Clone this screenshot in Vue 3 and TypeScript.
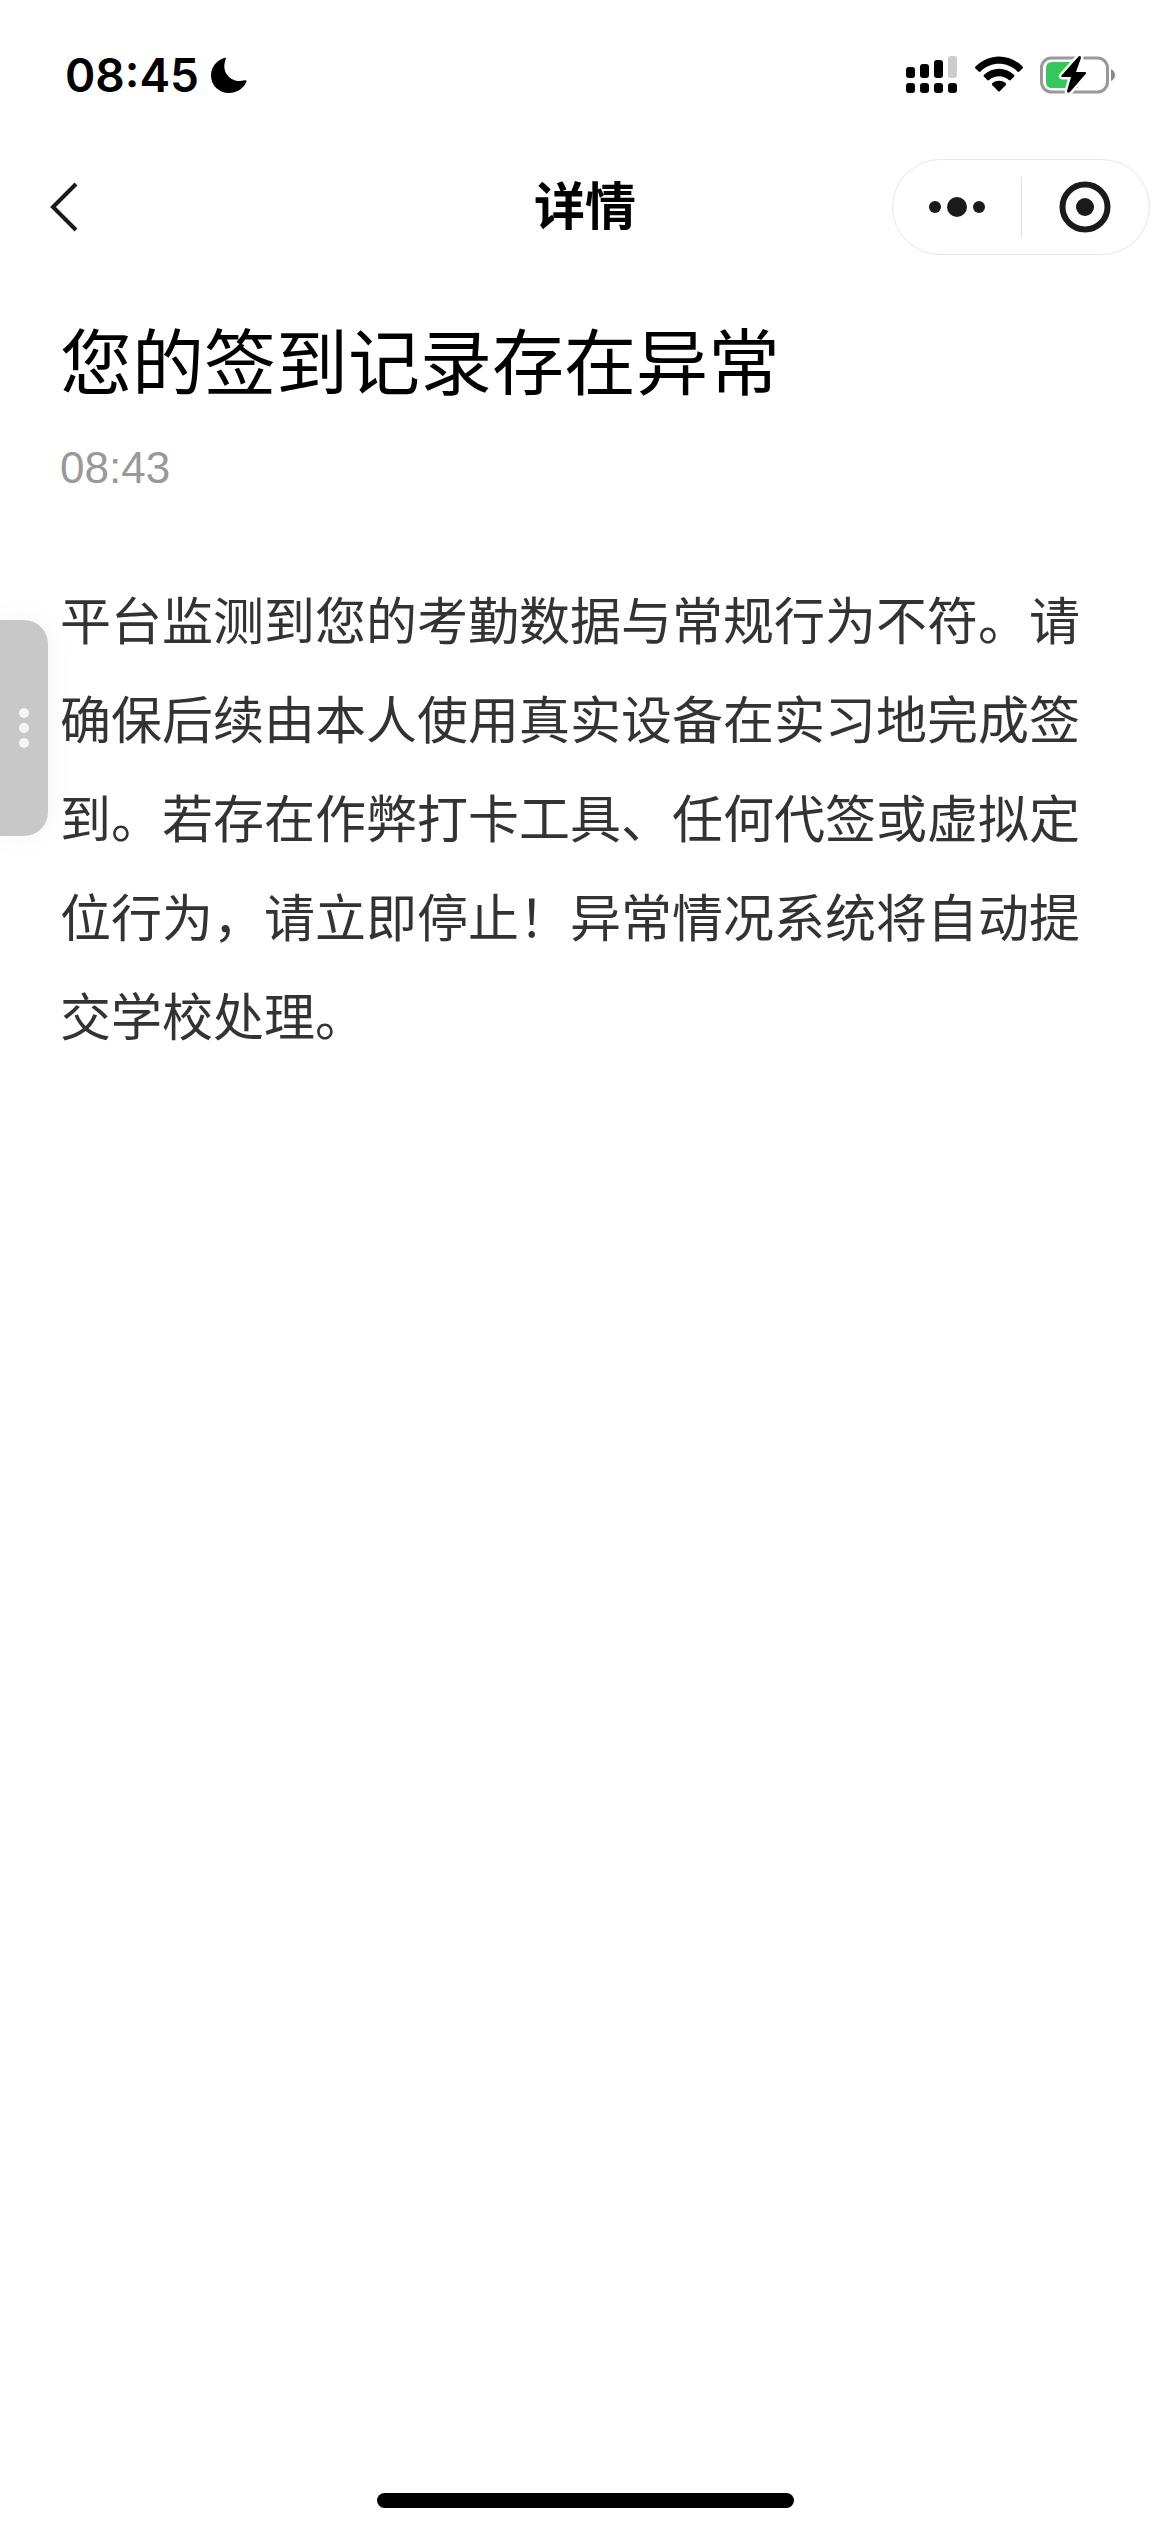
<script setup lang="ts">
const statusTime = '08:45'
const pageTitle = '详情'
const notice = {
  title: '您的签到记录存在异常',
  time: '08:43',
  body: '平台监测到您的考勤数据与常规行为不符。请确保后续由本人使用真实设备在实习地完成签到。若存在作弊打卡工具、任何代签或虚拟定位行为，请立即停止！异常情况系统将自动提交学校处理。',
}
const signalBars = [
  { x: 0, y: 11, height: 11, active: true },
  { x: 14, y: 8, height: 14, active: true },
  { x: 28, y: 4, height: 18, active: true },
  { x: 42, y: 0, height: 22, active: false },
]
</script>

<template>
  <div class="page">
    <header>
      <div class="status">
        <div class="status-left">
          <span class="clock">{{ statusTime }}</span>
          <svg width="36" height="36" viewBox="0 0 36 36" aria-hidden="true">
            <path d="M13 1 C14.500 0.300 15.300 1 14.700 2.400 C12.800 7 12.500 13 16.300 18 C20.500 23.700 27.500 25 33.600 23.300 C35.200 22.900 36 23.700 35.300 25 C32 32 25.500 36 18 36 C8 36 0 28.500 0 18.500 C0 10.500 5 3.800 13 1 Z" />
          </svg>
        </div>
        <div class="status-right">
          <svg width="52" height="38" viewBox="0 0 52 38" aria-hidden="true">
            <g v-for="bar in signalBars" :key="bar.x">
              <rect :x="bar.x" :y="bar.y" width="9" :height="bar.height" rx="3" :fill="bar.active ? '#000' : '#ccc'" />
              <rect :x="bar.x" y="27" width="9" height="10" rx="3" />
            </g>
          </svg>
          <svg width="50" height="38" viewBox="0 0 50 38" aria-hidden="true">
            <path d="M1.500 10.500 C15 -3 35 -3 48.500 10.500 Q49.500 11.500 48.500 12.500 L45.300 15.600 Q44.400 16.400 43.400 15.500 C33 5.300 17 5.300 6.600 15.500 Q5.600 16.400 4.700 15.600 L1.500 12.500 Q0.500 11.500 1.500 10.500 Z" />
            <path d="M10 18.700 C18.500 10.700 31.500 10.700 40 18.700 Q41 19.700 40 20.700 L36.700 24 Q35.800 24.800 34.800 24 C29 19 21 19 15.200 24 Q14.200 24.800 13.300 24 L10 20.700 Q9 19.700 10 18.700 Z" />
            <path d="M18.500 27 C22.300 24 27.700 24 31.500 27 Q32.700 28 31.600 29.200 L26 35 Q25 36 24 35 L18.400 29.200 Q17.300 28 18.500 27 Z" />
          </svg>
          <svg width="76" height="40" viewBox="0 0 76 40" aria-hidden="true">
            <rect x="1.500" y="3" width="66" height="34" rx="10" fill="none" stroke="#999" stroke-width="3" />
            <path d="M71 14 Q75 16 75 20 Q75 24 71 26 Z" fill="#8b8b8b" />
            <path d="M12 7 H38 V33 H12 Q6 33 6 27 V13 Q6 7 12 7 Z" fill="#34c759" />
            <path d="M38.500 1.500 L21.500 20.500 Q20.800 22 22.500 22 H31 L27 36 Q27 39 30 37 L46 18.500 Q46.700 17 45 17 H36 L41 3 Q41 0 38.500 1.500 Z" stroke="#fff" stroke-width="5" paint-order="stroke" stroke-linejoin="round" />
          </svg>
        </div>
      </div>
      <nav class="nav">
        <button class="back" type="button" aria-label="返回">
          <svg width="30" height="54" viewBox="0 0 30 54" aria-hidden="true">
            <path d="M26 4 L3 27 L26 50" fill="none" stroke="#1a1a1a" stroke-width="4" />
          </svg>
        </button>
        <h1>{{ pageTitle }}</h1>
        <div class="capsule">
          <button type="button" aria-label="更多">
            <svg width="58" height="52" viewBox="0 0 58 52" fill="#1a1a1a" aria-hidden="true">
              <circle cx="7" cy="26" r="6" />
              <circle cx="29" cy="26" r="10" />
              <circle cx="51" cy="26" r="6" />
            </svg>
          </button>
          <span class="divider"></span>
          <button type="button" aria-label="关闭">
            <svg width="52" height="52" viewBox="0 0 52 52" aria-hidden="true">
              <circle cx="26" cy="26" r="22.500" fill="none" stroke="#1a1a1a" stroke-width="6" />
              <circle cx="26" cy="26" r="9" fill="#1a1a1a" />
            </svg>
          </button>
        </div>
      </nav>
    </header>

    <main>
      <h2>{{ notice.title }}</h2>
      <time>{{ notice.time }}</time>
      <p>{{ notice.body }}</p>
    </main>

    <button class="handle" type="button" aria-label="展开侧栏">
      <i></i><i></i><i></i>
    </button>
    <footer><span class="home"></span></footer>
  </div>
</template>

<style>
body {
  margin: 0;
  background: #fff;
}
</style>

<style scoped>
.page {
  position: relative;
  display: flex;
  flex-direction: column;
  min-height: 100vh;
  background: #fff;
  color: #000;
  font-family: Inter, "Noto Sans CJK SC", sans-serif;
}
svg {
  display: block;
}
button {
  padding: 0;
  border: 0;
  background: none;
}
.status {
  display: flex;
  align-items: center;
  justify-content: space-between;
  height: 132px;
  padding: 9px 54px 0 65px;
}
.status-left {
  display: flex;
  align-items: center;
  gap: 12px;
}
.clock {
  font-size: 46px;
  line-height: 56px;
  font-weight: 600;
}
.status-right {
  display: flex;
  align-items: center;
  gap: 16px;
}
.nav {
  display: grid;
  grid-template-columns: 1fr auto 1fr;
  align-items: center;
  height: 132px;
  padding: 0 20px;
}
.back {
  justify-self: start;
  padding: 0 30px;
}
h1 {
  margin: 0;
  font-size: 51px;
  line-height: 72px;
  font-weight: 600;
}
.capsule {
  display: flex;
  align-items: center;
  justify-self: end;
  width: 258px;
  height: 96px;
  box-sizing: border-box;
  border: 1px solid #e6e6e6;
  border-radius: 48px;
}
.capsule button {
  flex: 1;
  display: flex;
  align-items: center;
  justify-content: center;
  height: 100%;
}
.divider {
  width: 1px;
  height: 60px;
  background: #e0e0e0;
}
main {
  flex: 1;
  padding: 36px 60px 0;
}
h2 {
  margin: 0;
  font-size: 72px;
  line-height: 108px;
  font-weight: 400;
}
time {
  display: block;
  margin-top: 24px;
  color: #999;
  font-family: "Liberation Sans", sans-serif;
  font-size: 44px;
  line-height: 54px;
}
p {
  margin: 77px 0 0;
  max-width: 1020px;
  color: #333;
  font-size: 51px;
  line-height: 99px;
}
.handle {
  position: absolute;
  top: 620px;
  left: 0;
  display: flex;
  flex-direction: column;
  align-items: center;
  justify-content: center;
  gap: 5px;
  width: 48px;
  height: 216px;
  border-radius: 0 24px 24px 0;
  background: #c8c8c8;
  box-shadow: 0 0 30px rgba(0, 0, 0, 0.05);
}
.handle i {
  width: 10px;
  height: 10px;
  border-radius: 50%;
  background: #f5f5f5;
}
footer {
  display: flex;
  justify-content: center;
  padding-bottom: 24px;
}
.home {
  width: 417px;
  height: 15px;
  border-radius: 8px;
  background: #000;
}
</style>
